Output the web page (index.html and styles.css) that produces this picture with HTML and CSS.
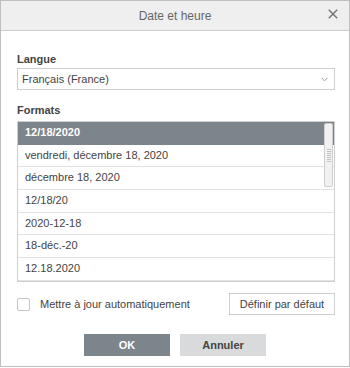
FILE: index.html
```html
<!DOCTYPE html>
<html lang="fr">
<head>
<meta charset="utf-8">
<title>Date et heure</title>
<link rel="stylesheet" href="styles.css">
</head>
<body>
<div class="dialog">
  <div class="header">
    <span class="title">Date et heure</span>
    <svg class="close" width="10" height="10" viewBox="0 0 10 10"><path d="M0.8 0.8 L9.2 9.2 M9.2 0.8 L0.8 9.2" stroke="#777" stroke-width="1.5" fill="none"/></svg>
  </div>
  <div class="body">
    <div class="label label-lang">Langue</div>
    <div class="select">
      <span>Français (France)</span>
      <svg class="chev" width="7" height="5" viewBox="0 0 7 5"><path d="M0.5 0.8 L3.5 3.8 L6.5 0.8" stroke="#999" stroke-width="1" fill="none"/></svg>
    </div>
    <div class="label label-formats">Formats</div>
    <div class="list">
      <div class="row selected">12/18/2020</div>
      <div class="row">vendredi, décembre 18, 2020</div>
      <div class="row">décembre 18, 2020</div>
      <div class="row">12/18/20</div>
      <div class="row">2020-12-18</div>
      <div class="row">18-déc.-20</div>
      <div class="row">12.18.2020</div>
      <div class="scrollbar"><div class="grip"></div></div>
    </div>
    <div class="options">
      <label class="check"><span class="box"></span><span>Mettre à jour automatiquement</span></label>
      <button class="btn-default">Définir par défaut</button>
    </div>
    <div class="footer">
      <button class="btn btn-ok">OK</button>
      <button class="btn btn-cancel">Annuler</button>
    </div>
  </div>
</div>
</body>
</html>
```

FILE: styles.css
```css
* { box-sizing: border-box; }
html, body { margin: 0; padding: 0; background: #fff; }
body {
  font-family: "Liberation Sans", Arial, sans-serif;
  font-size: 11px;
  color: #444;
}
.dialog {
  width: 350px;
  height: 367px;
  border: 1px solid #bfbfbf;
  background: #fff;
  display: flex;
  flex-direction: column;
}
.header {
  position: relative;
  height: 30px;
  flex: none;
  background: #efefef;
  border-bottom: 1px solid #cbcbcb;
  display: flex;
  align-items: center;
  justify-content: center;
}
.title {
  font-size: 12px;
  color: #666;
  line-height: 14px;
}
.close {
  position: absolute;
  right: 11px;
  top: 8px;
}
.body {
  padding: 0 14px 0 16px;
  display: flex;
  flex-direction: column;
}
.label {
  font-weight: bold;
  line-height: 13px;
  color: #444;
}
.label-lang { margin-top: 22px; }
.label-formats { margin-top: 14px; }
.select {
  margin-top: 2px;
  height: 22px;
  border: 1px solid #cfcfcf;
  display: flex;
  align-items: center;
  justify-content: space-between;
  padding: 0 6px 0 4px;
  color: #444;
}
.chev { margin-top: 1px; }
.list {
  position: relative;
  margin-top: 4px;
  height: 161px;
  border: 1px solid #cfcfcf;
  overflow: hidden;
}
.row {
  height: 22.7px;
  line-height: 21.7px;
  padding-left: 7px;
  border-bottom: 1px solid #e2e2e2;
  color: #444;
  white-space: nowrap;
}
.row.selected {
  background: #7d858c;
  color: #fff;
  font-weight: bold;
  border-bottom-color: #7d858c;
}
.scrollbar {
  position: absolute;
  top: 1px;
  right: 1px;
  width: 9px;
  height: 64px;
  background: #f1f1f1;
  border: 1px solid #cdcdcd;
  border-radius: 2px;
  display: flex;
  justify-content: center;
  align-items: center;
}
.grip {
  width: 4px;
  height: 13px;
  background: repeating-linear-gradient(to bottom, #c4c4c4 0, #c4c4c4 1px, transparent 1px, transparent 2px);
}
.options {
  margin-top: 11px;
  display: flex;
  align-items: center;
  justify-content: space-between;
}
.check {
  display: flex;
  align-items: center;
  gap: 10px;
  color: #444;
}
.box {
  width: 13px;
  height: 13px;
  border: 1px solid #c6c6c6;
  border-radius: 2px;
  background: #fff;
}
.btn-default {
  width: 106px;
  height: 22px;
  border: 1px solid #cfcfcf;
  background: #fff;
  font-family: "Liberation Sans", Arial, sans-serif;
  font-size: 11px;
  color: #444;
  padding: 0;
}
.footer {
  margin-top: 19px;
  display: flex;
  justify-content: center;
  gap: 10px;
  padding-right: 2px;
}
.btn {
  width: 86px;
  height: 22px;
  border: none;
  font-family: "Liberation Sans", Arial, sans-serif;
  font-size: 11px;
  font-weight: bold;
  padding: 0;
}
.btn-ok { background: #7d858c; color: #fff; }
.btn-cancel { background: #d8dadc; color: #444; }
```
